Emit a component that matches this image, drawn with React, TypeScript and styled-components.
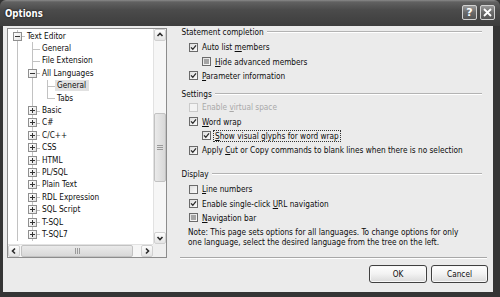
import React from "react";
import styled, {createGlobalStyle} from "styled-components";

const FONT = `"DejaVu Sans Condensed", "DejaVu Sans", sans-serif`;

const GlobalStyle = createGlobalStyle`
    html, body {
        margin: 0;
        padding: 0;
        background: #333;
    }
    body {
        font-family: ${FONT};
        font-size: 8.2px;
        color: #0c0c0c;
    }
`;

type Node = {
    label: string;
    level: number;
    expander?: "plus" | "minus";
    guides: boolean[];
    next: boolean;
    selected?: boolean;
};

const plusL1 = (label: string): Node => ({label, level: 1, expander: "plus", guides: [true], next: true});

const treeNodes: Node[] = [
    {label: "Text Editor", level: 0, expander: "minus", guides: [], next: true},
    {label: "General", level: 1, guides: [true], next: true},
    {label: "File Extension", level: 1, guides: [true], next: true},
    {label: "All Languages", level: 1, expander: "minus", guides: [true], next: true},
    {label: "General", level: 2, guides: [true, true], next: true, selected: true},
    {label: "Tabs", level: 2, guides: [true, true], next: false},
    plusL1("Basic"),
    plusL1("C#"),
    plusL1("C/C++"),
    plusL1("CSS"),
    plusL1("HTML"),
    plusL1("PL/SQL"),
    plusL1("Plain Text"),
    plusL1("RDL Expression"),
    plusL1("SQL Script"),
    plusL1("T-SQL"),
    plusL1("T-SQL7"),
];

const Chevron = ({dir}: { dir: "up" | "down" | "left" | "right" }) => {
    const d = {
        up: "M1.5 5 L4 2.5 L6.5 5",
        down: "M1.5 3 L4 5.5 L6.5 3",
        left: "M5 1.5 L2.5 4 L5 6.5",
        right: "M3 1.5 L5.5 4 L3 6.5",
    }[dir];
    return (
        <svg width="8" height="8" viewBox="0 0 8 8">
            <path d={d} fill="none" stroke="#2b2b2b" strokeWidth="1.6"/>
        </svg>
    );
};

const CheckMark = () => (
    <svg width="7" height="7" viewBox="0 0 7 7">
        <path d="M1 3.4 L2.8 5.3 L6 1.4" fill="none" stroke="#2a2a2a" strokeWidth="1.3"/>
    </svg>
);

type BoxState = "checked" | "empty" | "mixed" | "disabled";

const CheckRow = ({level, state, focus, disabled, children}: {
    level: number;
    state: BoxState;
    focus?: boolean;
    disabled?: boolean;
    children: React.ReactNode;
}) => (
    <Row $level={level} $disabled={disabled}>
        <Box $state={state}>{state === "checked" && <CheckMark/>}</Box>
        <RowText $focus={focus}>{children}</RowText>
    </Row>
);

const App = () => {
    return (
        <>
            <GlobalStyle/>
            <Window>
                <TitleBar>
                    <Title>Options</Title>
                    <CapButtons>
                        <CapButton>?</CapButton>
                        <CapButton>
                            <svg width="9" height="9" viewBox="0 0 9 9">
                                <path d="M1 1 L8 8 M8 1 L1 8" stroke="#fff" strokeWidth="1.8"/>
                            </svg>
                        </CapButton>
                    </CapButtons>
                </TitleBar>
                <Frame>
                    <Client>
                        <Tree>
                            <TreeList>
                                {treeNodes.map((n, i) => (
                                    <TreeRow key={i}>
                                        {n.guides.map((g, j) => <Guide key={j} $on={g}/>)}
                                        <Connector $next={n.next}>
                                            {n.expander && <Expander $plus={n.expander === "plus"}/>}
                                        </Connector>
                                        <TreeLabel $selected={n.selected}>{n.label}</TreeLabel>
                                    </TreeRow>
                                ))}
                            </TreeList>
                            <VScroll>
                                <ArrowBtn><Chevron dir="up"/></ArrowBtn>
                                <VTrack>
                                    <VThumb><Grip $vertical/></VThumb>
                                </VTrack>
                                <ArrowBtn><Chevron dir="down"/></ArrowBtn>
                            </VScroll>
                            <HScroll>
                                <ArrowBtn><Chevron dir="left"/></ArrowBtn>
                                <HTrack>
                                    <HThumb><Grip/></HThumb>
                                </HTrack>
                                <ArrowBtn><Chevron dir="right"/></ArrowBtn>
                            </HScroll>
                            <Corner/>
                        </Tree>

                        <Options>
                            <GroupHead $top={0} $bottom={2}>
                                <span>Statement completion</span><Rule/>
                            </GroupHead>
                            <CheckRow level={1} state="checked">Auto list <u>m</u>embers</CheckRow>
                            <CheckRow level={2} state="mixed"><u>H</u>ide advanced members</CheckRow>
                            <CheckRow level={1} state="checked"><u>P</u>arameter information</CheckRow>

                            <GroupHead $top={4.8} $bottom={0}>
                                <span>Settings</span><Rule/>
                            </GroupHead>
                            <CheckRow level={1} state="disabled" disabled>Enable <u>v</u>irtual space</CheckRow>
                            <CheckRow level={1} state="checked"><u>W</u>ord wrap</CheckRow>
                            <CheckRow level={2} state="checked" focus><u>S</u>how visual glyphs for word wrap</CheckRow>
                            <CheckRow level={1} state="checked">
                                Apply <u>C</u>ut or Copy commands to blank lines when there is no selection
                            </CheckRow>

                            <GroupHead $top={10.4} $bottom={2}>
                                <span>Display</span><Rule/>
                            </GroupHead>
                            <CheckRow level={1} state="empty"><u>L</u>ine numbers</CheckRow>
                            <CheckRow level={1} state="checked">Enable single-click <u>U</u>RL navigation</CheckRow>
                            <CheckRow level={1} state="mixed"><u>N</u>avigation bar</CheckRow>

                            <Note>
                                Note: This page sets options for all languages. To change options for only<br/>
                                one language, select the desired language from the tree on the left.
                            </Note>

                            <Separator/>
                            <ButtonRow>
                                <DlgButton $width={58}>OK</DlgButton>
                                <DlgButton $width={57}>Cancel</DlgButton>
                            </ButtonRow>
                        </Options>
                    </Client>
                </Frame>
            </Window>
        </>
    );
};

export default App;


const Window = styled.div`
    width: 500px;
    height: 297px;
    display: flex;
    flex-direction: column;
    background: #353535;
    border-radius: 6px 6px 0 0;
    overflow: hidden;
`;

const TitleBar = styled.div`
    height: 26px;
    flex: none;
    display: flex;
    align-items: center;
    justify-content: space-between;
    padding: 0 5px;
    background: linear-gradient(to bottom, #8a8a8a 0, #616161 2px, #4b4b4b 10px, #3d3d3d 26px);
`;

const Title = styled.span`
    color: #fff;
    font-weight: bold;
    font-size: 9.6px;
    text-shadow: 0 0 2px #000;
    margin-top: 1px;
`;

const CapButtons = styled.div`
    display: flex;
    gap: 3px;
    margin-top: -2px;
`;

const CapButton = styled.div`
    width: 15px;
    height: 15px;
    box-sizing: border-box;
    border: 1px solid #d2d2d2;
    border-radius: 2px;
    background: linear-gradient(to bottom, #9a9a9a, #6a6a6a 50%, #555);
    color: #fff;
    font: bold 11px "DejaVu Sans", sans-serif;
    display: flex;
    align-items: center;
    justify-content: center;
`;

const Frame = styled.div`
    flex: 1;
    display: flex;
    padding: 0 7px 5px 3px;
    min-height: 0;
`;

const Client = styled.div`
    flex: 1;
    display: flex;
    background: #ebebeb;
    padding: 0 5px 0 4px;
`;

const Tree = styled.div`
    width: 160px;
    height: 230px;
    margin-top: 2px;
    box-sizing: border-box;
    border: 1px solid #8c8c8c;
    background: #fff;
    display: grid;
    grid-template-columns: 1fr 13px;
    grid-template-rows: 1fr 13px;
    flex: none;
`;

const TreeList = styled.div`
    overflow: hidden;
    padding: 1px 0 0 2px;
`;

const TreeRow = styled.div`
    display: flex;
    align-items: center;
    height: 12.4px;
    white-space: nowrap;
`;

const Guide = styled.div<{ $on: boolean }>`
    width: 15px;
    height: 100%;
    flex: none;
    position: relative;

    &::before {
        content: "";
        position: absolute;
        left: 7px;
        top: 0;
        bottom: 0;
        width: 1px;
        background: ${p => (p.$on ? "#c2c2c2" : "transparent")};
    }
`;

const Connector = styled.div<{ $next: boolean }>`
    width: 15px;
    height: 100%;
    flex: none;
    position: relative;
    display: flex;
    align-items: center;
    justify-content: center;

    &::before {
        content: "";
        position: absolute;
        left: 7px;
        top: 0;
        bottom: ${p => (p.$next ? "0" : "50%")};
        width: 1px;
        background: #c2c2c2;
    }

    &::after {
        content: "";
        position: absolute;
        left: 7px;
        right: 0;
        top: 50%;
        height: 1px;
        background: #c2c2c2;
    }
`;

const Expander = styled.span<{ $plus: boolean }>`
    position: relative;
    z-index: 1;
    width: 9px;
    height: 9px;
    box-sizing: border-box;
    border: 1px solid #8f8f8f;
    background: linear-gradient(135deg, #fff, #e2e2e2);
    margin-left: -1px;

    &::before {
        content: "";
        position: absolute;
        left: 1px;
        width: 5px;
        top: 3px;
        height: 1px;
        background: #333;
    }

    &::after {
        content: "";
        position: absolute;
        left: 3px;
        width: 1px;
        top: 1px;
        height: 5px;
        background: ${p => (p.$plus ? "#333" : "transparent")};
    }
`;

const TreeLabel = styled.span<{ $selected?: boolean }>`
    height: 11px;
    line-height: 11px;
    padding: 0 3px 0 2px;
    background: ${p => (p.$selected ? "#e1e1e1" : "transparent")};
`;

const VScroll = styled.div`
    grid-column: 2;
    grid-row: 1;
    display: flex;
    flex-direction: column;
    background: #f6f6f6;
    border-left: 1px solid #e2e2e2;
`;

const HScroll = styled.div`
    grid-column: 1;
    grid-row: 2;
    display: flex;
    background: #f6f6f6;
    border-top: 1px solid #e2e2e2;
`;

const Corner = styled.div`
    grid-column: 2;
    grid-row: 2;
    background: #efefef;
`;

const ArrowBtn = styled.div`
    width: 12px;
    height: 12px;
    flex: none;
    box-sizing: border-box;
    border: 1px solid #d0d0d0;
    border-radius: 2px;
    background: linear-gradient(to bottom, #fdfdfd, #e4e4e4);
    display: flex;
    align-items: center;
    justify-content: center;
`;

const VTrack = styled.div`
    flex: 1;
    padding-top: 72px;
`;

const HTrack = styled.div`
    flex: 1;
    display: flex;
    padding-left: 1px;
`;

const VThumb = styled.div`
    height: 69px;
    box-sizing: border-box;
    border: 1px solid #c2c2c2;
    border-radius: 2px;
    background: linear-gradient(to right, #eaeaea, #d8d8d8);
    display: flex;
    align-items: center;
    justify-content: center;
`;

const HThumb = styled.div`
    width: 112px;
    box-sizing: border-box;
    border: 1px solid #c2c2c2;
    border-radius: 2px;
    background: linear-gradient(to bottom, #eaeaea, #d8d8d8);
    display: flex;
    align-items: center;
    justify-content: center;
`;

const Grip = styled.span<{ $vertical?: boolean }>`
    width: ${p => (p.$vertical ? "6px" : "5px")};
    height: ${p => (p.$vertical ? "5px" : "6px")};
    background: repeating-linear-gradient(
        ${p => (p.$vertical ? "to bottom" : "to right")},
        #9a9a9a 0, #9a9a9a 1px, transparent 1px, transparent 2px
    );
`;

const Options = styled.div`
    flex: 1;
    margin-left: 13px;
    display: flex;
    flex-direction: column;
`;

const GroupHead = styled.div<{ $top: number; $bottom: number }>`
    display: flex;
    align-items: center;
    height: 12px;
    padding-left: 1.5px;
    margin-top: ${p => p.$top}px;
    margin-bottom: ${p => p.$bottom}px;
`;

const Rule = styled.span`
    flex: 1;
    margin: 0 6px 0 3px;
    border-top: 1px solid #b3b3b3;
    border-bottom: 1px solid #fff;
`;

const Row = styled.div<{ $level: number; $disabled?: boolean }>`
    display: flex;
    align-items: center;
    height: 14.4px;
    padding-left: ${p => (p.$level === 1 ? 9 : 22)}px;
    color: ${p => (p.$disabled ? "#a9a9a9" : "inherit")};
    white-space: nowrap;
`;

const Box = styled.span<{ $state: BoxState }>`
    width: 9px;
    height: 9px;
    flex: none;
    box-sizing: border-box;
    margin-right: 3px;
    border: 1px solid ${p => (p.$state === "disabled" ? "#cacaca" : "#6a6a6a")};
    background: ${p => (p.$state === "disabled"
        ? "#f3f3f3"
        : "linear-gradient(135deg, #dedede, #fbfbfb)")};
    display: flex;
    align-items: center;
    justify-content: center;

    &::after {
        content: "";
        display: ${p => (p.$state === "mixed" ? "block" : "none")};
        width: 5px;
        height: 5px;
        background: #a4a4a4;
    }
`;

const RowText = styled.span<{ $focus?: boolean }>`
    padding: 0 1px;
    outline: ${p => (p.$focus ? "1px dotted #333" : "none")};
    outline-offset: 0;
    line-height: 10px;
`;

const Note = styled.div`
    margin-top: 1.5px;
    padding-left: 8px;
    line-height: 10px;
    white-space: nowrap;
`;

const Separator = styled.div`
    margin: 10px 1px 0 0;
    border-top: 1px solid #a8a8a8;
    border-bottom: 1px solid #fff;
`;

const ButtonRow = styled.div`
    display: flex;
    justify-content: flex-end;
    gap: 4px;
    margin-top: 6.5px;
`;

const DlgButton = styled.div<{ $width: number }>`
    width: ${p => p.$width}px;
    height: 18px;
    box-sizing: border-box;
    border: 1px solid #404040;
    border-radius: 3px;
    background: linear-gradient(to bottom, #ffffff, #f2f2f2 50%, #dadada);
    box-shadow: inset 0 0 0 1px #f8f8f8;
    display: flex;
    align-items: center;
    justify-content: center;
`;
